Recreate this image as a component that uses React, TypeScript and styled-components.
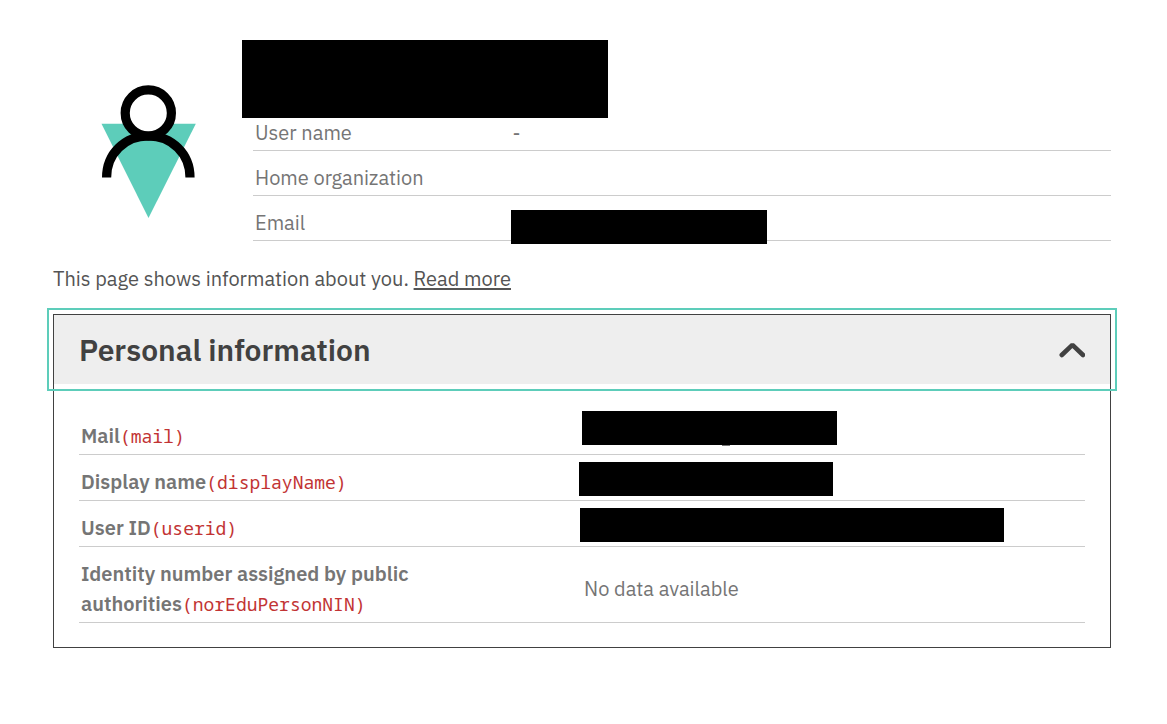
import React, { useState } from 'react';
import styled, { createGlobalStyle } from 'styled-components';

const GlobalStyle = createGlobalStyle`
  *, *::before, *::after {
    box-sizing: border-box;
  }
  body {
    margin: 0;
    background: #ffffff;
    color: #545454;
    font-family: 'IBM Plex Sans', 'Noto Sans', sans-serif;
    font-size: 20px;
    line-height: 30px;
  }
`;

const Page = styled.main`
  padding: 40px 56px 40px 53px;
`;

const Profile = styled.header`
  display: grid;
  grid-template-columns: 200px 1fr;
`;

const Avatar = styled.svg`
  display: block;
  width: 96px;
  height: 134px;
  margin: 45px 0 0 48px;
`;

const NameBlock = styled.h1`
  width: 366px;
  height: 78px;
  margin: 0 0 0 -11px;
  background: #000000;
`;

const DataTable = styled.table<{ $labelWidth: string }>`
  width: 100%;
  border-collapse: separate;
  border-spacing: 0;
  table-layout: fixed;
  color: #757575;

  th {
    width: ${(p) => p.$labelWidth};
  }
`;

const Row = styled.tr<{ $flush?: boolean }>`
  > * {
    position: relative;
    padding: ${(p) => (p.$flush ? '0 2px 2px' : '12px 2px 2px')};
    border-bottom: 1px solid #cccccc;
    text-align: left;
    vertical-align: middle;
  }
`;

const PlainLabel = styled.th`
  font-weight: 400;
`;

const AttributeLabel = styled.th`
  && {
    padding: 12px 2px 3px;
  }
  font-weight: 600;
`;

const AttributeValue = styled.td`
  && {
    padding: 12px 2px 3px;
  }
`;

const Code = styled.code`
  color: #c23434;
  font-family: Consolas, 'Noto Sans Mono', 'Liberation Mono', monospace;
  font-size: 18px;
  font-weight: 400;
  line-height: 20px;
`;

const Redaction = styled.span<{ $top: number; $left: number; $width: number }>`
  position: absolute;
  z-index: 1;
  top: ${(p) => p.$top}px;
  left: ${(p) => p.$left}px;
  width: ${(p) => p.$width}px;
  height: 34px;
  background: #000000;
`;

const Descender = styled.span`
  position: absolute;
  top: 34px;
  left: 140px;
  width: 8px;
  height: 1px;
  background: #757575;
`;

const Intro = styled.p`
  margin: 23px 0 20px;
`;

const Link = styled.a`
  color: #545454;
  text-decoration: underline;
  text-decoration-thickness: 2px;
  text-underline-offset: 2px;
`;

const Panel = styled.section`
  border: 1px solid #414141;
`;

const PanelTitle = styled.h2`
  margin: 0;
  font-size: 30px;
  line-height: 36px;
`;

const PanelToggle = styled.button`
  display: flex;
  align-items: center;
  justify-content: space-between;
  width: 100%;
  height: 69px;
  padding: 0 25px;
  border: 0;
  outline: 2px solid #5dcdba;
  outline-offset: 5px;
  background: #eeeeee;
  color: #414141;
  font: inherit;
  font-weight: 600;
  text-align: left;
  cursor: pointer;
`;

const PanelBody = styled.div`
  padding: 25px 25px 24px;
`;

const Chevron = ({ open }: { open: boolean }) => (
  <svg width="28" height="20" viewBox="0 0 28 20" fill="none" aria-hidden="true">
    <path
      d={open ? 'M4.8 15 15.4 4.8 26 15' : 'M4.8 5 15.4 15.2 26 5'}
      stroke="currentColor"
      strokeWidth="4.6"
      strokeLinecap="round"
      strokeLinejoin="bevel"
    />
  </svg>
);

type Attribute = {
  label: string;
  code: string;
  hidden?: { top: number; left: number; width: number; descender?: boolean };
};

const attributes: Attribute[] = [
  { label: 'Mail', code: 'mail', hidden: { top: 2, left: 0, width: 255, descender: true } },
  { label: 'Display name', code: 'displayName', hidden: { top: 7, left: -3, width: 254 } },
  { label: 'User ID', code: 'userid', hidden: { top: 7, left: -2, width: 424 } },
  { label: 'Identity number assigned by public authorities', code: 'norEduPersonNIN' },
];

export default function App() {
  const [open, setOpen] = useState(true);

  return (
    <>
      <GlobalStyle />
      <Page>
        <Profile>
          <Avatar viewBox="0 0 96 134" aria-hidden="true">
            <path d="M0.5 38.7H94.8L47.5 133Z" fill="#5dcdba" />
            <circle cx="47.3" cy="28" r="23.1" fill="#ffffff" stroke="#000000" strokeWidth="9.2" />
            <path d="M5.6 92.5C5.6 68.5 24 51 47.3 51S89 68.5 89 92.5" fill="none" stroke="#000000" strokeWidth="9.2" />
          </Avatar>
          <div>
            <NameBlock aria-label="Name" />
            <DataTable $labelWidth="30%">
              <tbody>
                <Row $flush>
                  <PlainLabel scope="row">User name</PlainLabel>
                  <td>-</td>
                </Row>
                <Row>
                  <PlainLabel scope="row">Home organization</PlainLabel>
                  <td />
                </Row>
                <Row>
                  <PlainLabel scope="row">Email</PlainLabel>
                  <td>
                    <Redaction $top={14} $left={1} $width={256} />
                  </td>
                </Row>
              </tbody>
            </DataTable>
          </div>
        </Profile>

        <Intro>
          This page shows information about you. <Link href="#more">Read more</Link>
        </Intro>

        <Panel>
          <PanelTitle>
            <PanelToggle type="button" aria-expanded={open} onClick={() => setOpen(!open)}>
              Personal information
              <Chevron open={open} />
            </PanelToggle>
          </PanelTitle>
          {open && (
            <PanelBody>
              <DataTable $labelWidth="50%">
                <tbody>
                  {attributes.map(({ label, code, hidden }) => (
                    <Row key={code}>
                      <AttributeLabel scope="row">
                        {label}
                        <Code>{`(${code})`}</Code>
                      </AttributeLabel>
                      <AttributeValue>
                        {hidden ? (
                          <Redaction $top={hidden.top} $left={hidden.left} $width={hidden.width}>
                            {hidden.descender && <Descender />}
                          </Redaction>
                        ) : (
                          'No data available'
                        )}
                      </AttributeValue>
                    </Row>
                  ))}
                </tbody>
              </DataTable>
            </PanelBody>
          )}
        </Panel>
      </Page>
    </>
  );
}
